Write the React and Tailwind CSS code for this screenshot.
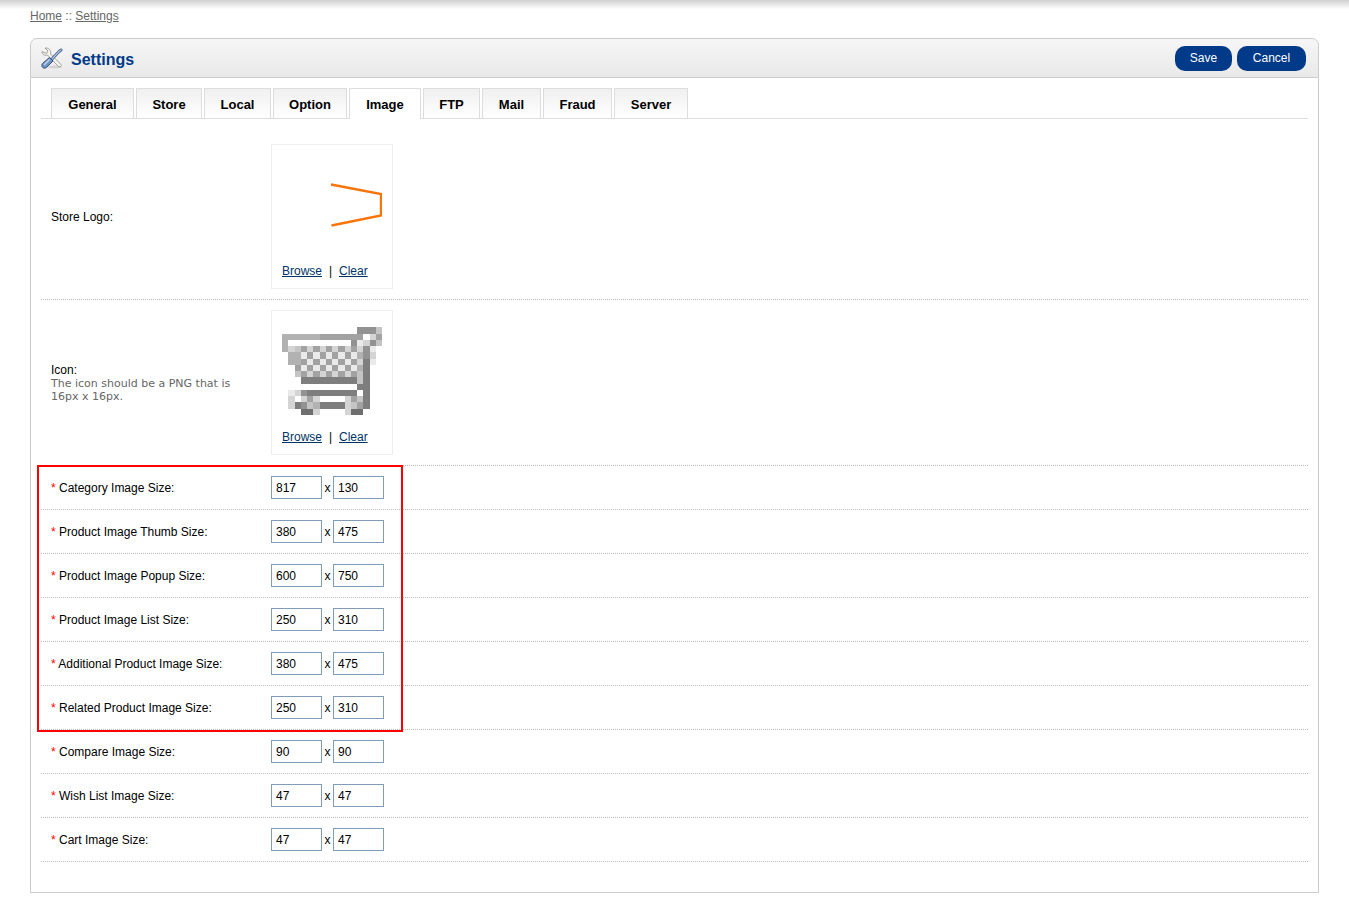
const TABS = [
  ["General", "w-[83px]"],
  ["Store", "w-[66px]"],
  ["Local", "w-[67px]"],
  ["Option", "w-[74px]"],
  ["Image", "w-[72px]"],
  ["FTP", "w-[57px]"],
  ["Mail", "w-[59px]"],
  ["Fraud", "w-[69px]"],
  ["Server", "w-[74px]"],
];

const REQUIRED_SIZES = [
  ["Category Image Size:", 817, 130],
  ["Product Image Thumb Size:", 380, 475],
  ["Product Image Popup Size:", 600, 750],
  ["Product Image List Size:", 250, 310],
  ["Additional Product Image Size:", 380, 475],
  ["Related Product Image Size:", 250, 310],
];

const OTHER_SIZES = [
  ["Compare Image Size:", 90, 90],
  ["Wish List Image Size:", 47, 47],
  ["Cart Image Size:", 47, 47],
];

// 16x16 greyscale bitmap; each letter is a shade, a dot is blank.
const SHADES = {
  a: "#6e6e6e", b: "#7e7e7e", c: "#929292", d: "#a2a2a2",
  e: "#b2b2b2", f: "#c4c4c4", g: "#d4d4d4", h: "#eaeaea",
};

const CART = [
  "................",
  "............cccf",
  "eeeeeeddddddd.gd",
  "e..........chgcf",
  "egfdgdgdgdgdgch.",
  ".eehdhdhdhdhecg.",
  ".eedhdhdhdhdgbh.",
  "..dhdhdhdhdheb..",
  "..fdgdgdgdgdfb..",
  "...bbbbbbbbbfb..",
  "............bb..",
  ".hgcbbbbbbbb.b..",
  ".g.gdg....gdfb..",
  ".gbcfebbbbgfdb..",
  "...aag....gaa...",
  "................",
];

function CartIcon() {
  return (
    <svg viewBox="0 0 16 16" className="size-[100px]" role="img" aria-label="Cart" shapeRendering="crispEdges">
      {CART.flatMap((row, y) =>
        [...row].map((s, x) =>
          SHADES[s] ? <rect key={x + "-" + y} x={x} y={y} width="1" height="1" fill={SHADES[s]} /> : null
        )
      )}
    </svg>
  );
}

function StoreLogo() {
  return (
    <svg viewBox="0 0 100 100" className="size-[100px]" role="img" aria-label="Store logo" fill="none">
      <path d="M49 29.5 L99 39 V60.5 L49.5 70.5" stroke="#fb7408" strokeWidth="2.4" />
    </svg>
  );
}

function ToolsIcon() {
  return (
    <svg viewBox="0 0 22 22" className="size-[22px]" aria-hidden="true" fill="none">
      <ellipse cx="14" cy="20" rx="7" ry="1.5" fill="#d2d2d2" />
      <path
        d="M4 1 L7 4 L5.5 6.500 L3 5.500 L1 4.500 C1 7.500 3.500 9 6.500 8 L17 19 C19 21 21.500 19 19.500 17 L9.500 7 C10.500 3.500 8 0.800 4 1Z"
        fill="#f4f3ee"
        stroke="#98978e"
        strokeWidth="0.9"
      />
      <path d="M20 3 L18 4.500 L11 12" stroke="#47648c" strokeWidth="3" strokeLinecap="round" />
      <path d="M20 3 L18 4.500 L11 12" stroke="#a9c0df" strokeWidth="1.3" strokeLinecap="round" />
      <path d="M8.500 10.500 L12 14 L5.500 20.500 C2.500 22.500 -0.500 19.500 1.500 16.500Z" fill="#6f93c4" stroke="#34507c" />
      <path d="M8.500 12.500 L3 18" stroke="#bcd0ea" strokeWidth="1.6" />
    </svg>
  );
}

function ImagePicker({ children }) {
  return (
    <div className="h-[145px] w-[122px] border border-[#eeeeee] p-[10px]">
      {children}
      <div className="mt-[8px] flex text-[12px] leading-[16px]">
        <a href="#browse" className="text-[#003366] underline">Browse</a>
        <span className="w-[17px] text-center">|</span>
        <a href="#clear" className="text-[#003366] underline">Clear</a>
      </div>
    </div>
  );
}

function SizeRow({ label, width, height }) {
  const field = "h-[23px] w-[51px] border border-[#7f9db9] bg-white px-[4px] text-[12px]";
  return (
    <div role="group" aria-label={label} className="flex h-[44px] items-center border-b border-dotted border-[#bbbbbb] pl-[10px]">
      <span className="w-[220px]">
        <span className="text-[#ff0000]">*</span> {label}
      </span>
      <input aria-label={label + " width"} defaultValue={width} className={field} />
      <span className="w-[11px] text-center">x</span>
      <input aria-label={label + " height"} defaultValue={height} className={field} />
    </div>
  );
}

export default function App() {
  return (
    <div className="bg-white font-['Liberation_Sans',Arial,sans-serif] text-[12px] leading-[14px] text-black">
      <div className="h-[9px] bg-linear-to-b from-[#d0d0d0] to-white" />
      <nav aria-label="Breadcrumb" className="ml-[30px] text-[#666666]">
        <a href="#home" className="underline">Home</a> :: <a href="#settings" className="underline">Settings</a>
      </nav>

      <main className="mx-[30px] mt-[15px]">
        <header className="flex h-[40px] items-center rounded-t-[7px] border border-[#cccccc] bg-linear-to-b from-[#f6f6f6] to-[#e9e9e9] pr-[12px] pl-[10px]">
          <ToolsIcon />
          <h1 className="ml-[8px] grow pt-[4px] text-[16px] leading-[20px] font-bold text-[#003a88]">Settings</h1>
          <div className="flex gap-[5px]">
            <button className="h-[25px] w-[57px] rounded-[10px] bg-[#003a88] text-white">Save</button>
            <button className="h-[25px] w-[69px] rounded-[10px] bg-[#003a88] text-white">Cancel</button>
          </div>
        </header>

        <div className="border-x border-b border-[#cccccc] px-[10px] pt-[10px] pb-[30px]">
          <div role="tablist" className="flex h-[31px] gap-[2px] border-b border-[#dddddd] pl-[10px]">
            {TABS.map(([name, width]) => (
              <button
                key={name}
                role="tab"
                aria-selected={name === "Image"}
                className={
                  width +
                  " border-x border-t border-[#dddddd] pt-[2px] text-[13px] font-bold " +
                  (name === "Image" ? "-mb-px bg-white" : "bg-linear-to-b from-[#f0f0f0] to-white")
                }
              >
                {name}
              </button>
            ))}
          </div>

          <form className="mt-[15px]">
            <div className="flex items-center border-b border-dotted border-[#bbbbbb] py-[10px] pl-[10px]">
              <span className="w-[220px]">Store Logo:</span>
              <ImagePicker><StoreLogo /></ImagePicker>
            </div>
            <div className="flex items-center border-b border-dotted border-[#bbbbbb] py-[10px] pl-[10px]">
              <div className="w-[220px] pr-[20px]">
                Icon:
                <p className="font-['DejaVu_Sans',Verdana,sans-serif] text-[11px] leading-[13px] text-[#666666]">
                  The icon should be a PNG that is 16px x 16px.
                </p>
              </div>
              <ImagePicker><CartIcon /></ImagePicker>
            </div>
            <div className="relative">
              {REQUIRED_SIZES.map(([label, w, h]) => (
                <SizeRow key={label} label={label} width={w} height={h} />
              ))}
              <div className="pointer-events-none absolute -top-px -bottom-[2px] -left-[4px] w-[366px] border-2 border-[#ff0000]" />
            </div>
            {OTHER_SIZES.map(([label, w, h]) => (
              <SizeRow key={label} label={label} width={w} height={h} />
            ))}
          </form>
        </div>
      </main>
    </div>
  );
}
